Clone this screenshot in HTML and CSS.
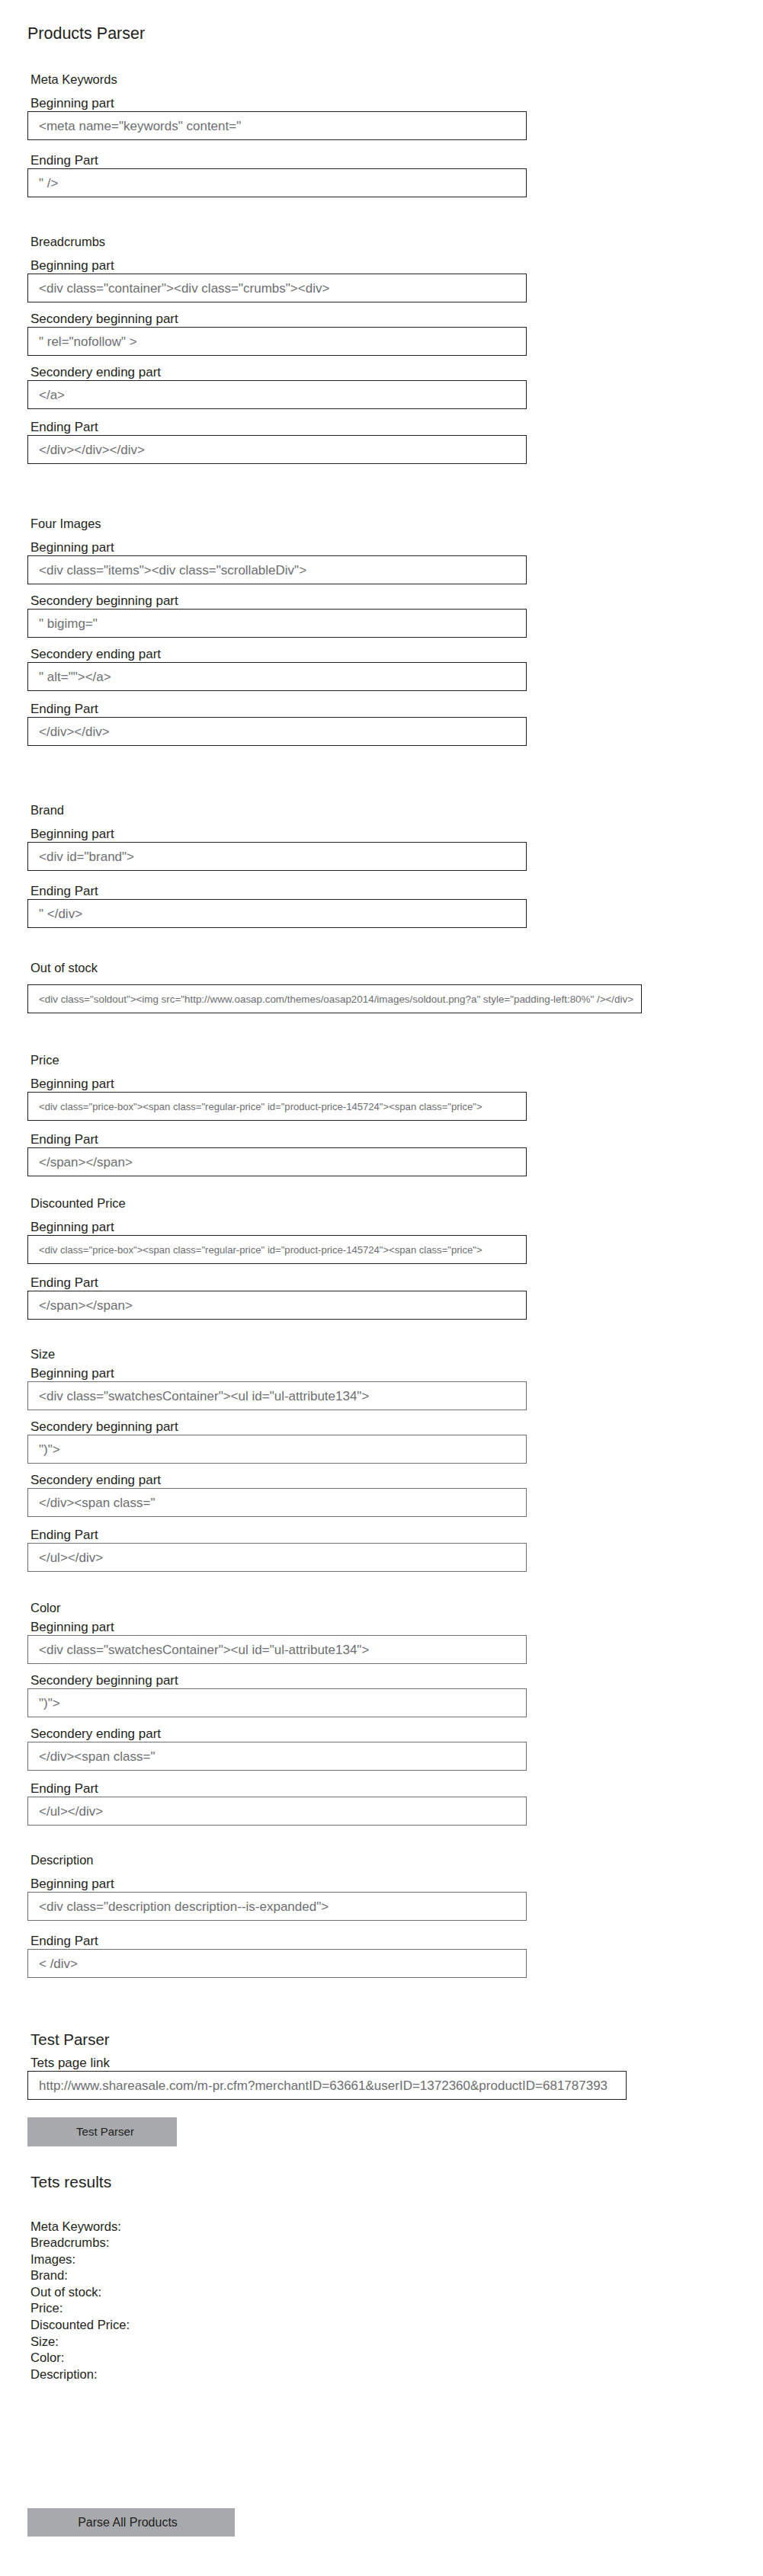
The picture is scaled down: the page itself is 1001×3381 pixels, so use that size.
FILE: index.html
```html
<!DOCTYPE html>
<html lang="en">
<head>
<meta charset="utf-8">
<title>Products Parser</title>
<link rel="stylesheet" href="styles.css">
</head>
<body>
<main class="page">
  <h1 class="page-title">Products Parser</h1>

  <section class="group g-meta">
    <h2 class="group-title">Meta Keywords</h2>
    <div class="field">
      <div class="field-label">Beginning part</div>
      <div class="field-box">&lt;meta name="keywords" content="</div>
    </div>
    <div class="field field-end-wide">
      <div class="field-label">Ending Part</div>
      <div class="field-box">" /&gt;</div>
    </div>
  </section>

  <section class="group g-crumbs">
    <h2 class="group-title">Breadcrumbs</h2>
    <div class="field">
      <div class="field-label">Beginning part</div>
      <div class="field-box">&lt;div class="container"&gt;&lt;div class="crumbs"&gt;&lt;div&gt;</div>
    </div>
    <div class="field">
      <div class="field-label">Secondery beginning part</div>
      <div class="field-box">" rel="nofollow" &gt;</div>
    </div>
    <div class="field">
      <div class="field-label">Secondery ending part</div>
      <div class="field-box">&lt;/a&gt;</div>
    </div>
    <div class="field field-end">
      <div class="field-label">Ending Part</div>
      <div class="field-box">&lt;/div&gt;&lt;/div&gt;&lt;/div&gt;</div>
    </div>
  </section>

  <section class="group g-images">
    <h2 class="group-title">Four Images</h2>
    <div class="field">
      <div class="field-label">Beginning part</div>
      <div class="field-box">&lt;div class="items"&gt;&lt;div class="scrollableDiv"&gt;</div>
    </div>
    <div class="field">
      <div class="field-label">Secondery beginning part</div>
      <div class="field-box">" bigimg="</div>
    </div>
    <div class="field">
      <div class="field-label">Secondery ending part</div>
      <div class="field-box">" alt=""&gt;&lt;/a&gt;</div>
    </div>
    <div class="field field-end">
      <div class="field-label">Ending Part</div>
      <div class="field-box">&lt;/div&gt;&lt;/div&gt;</div>
    </div>
  </section>

  <section class="group g-brand">
    <h2 class="group-title">Brand</h2>
    <div class="field">
      <div class="field-label">Beginning part</div>
      <div class="field-box">&lt;div id="brand"&gt;</div>
    </div>
    <div class="field field-end-wide">
      <div class="field-label">Ending Part</div>
      <div class="field-box">" &lt;/div&gt;</div>
    </div>
  </section>

  <section class="group g-stock">
    <h2 class="group-title">Out of stock</h2>
    <div class="field">
      <div class="field-box field-box-long field-box-small">&lt;div class="soldout"&gt;&lt;img src="http://www.oasap.com/themes/oasap2014/images/soldout.png?a" style="padding-left:80%" /&gt;&lt;/div&gt;</div>
    </div>
  </section>

  <section class="group g-price">
    <h2 class="group-title">Price</h2>
    <div class="field">
      <div class="field-label">Beginning part</div>
      <div class="field-box field-box-small">&lt;div class="price-box"&gt;&lt;span class="regular-price" id="product-price-145724"&gt;&lt;span class="price"&gt;</div>
    </div>
    <div class="field field-end-mid">
      <div class="field-label">Ending Part</div>
      <div class="field-box">&lt;/span&gt;&lt;/span&gt;</div>
    </div>
  </section>

  <section class="group g-discount">
    <h2 class="group-title">Discounted Price</h2>
    <div class="field">
      <div class="field-label">Beginning part</div>
      <div class="field-box field-box-small">&lt;div class="price-box"&gt;&lt;span class="regular-price" id="product-price-145724"&gt;&lt;span class="price"&gt;</div>
    </div>
    <div class="field field-end-mid">
      <div class="field-label">Ending Part</div>
      <div class="field-box">&lt;/span&gt;&lt;/span&gt;</div>
    </div>
  </section>

  <section class="group g-size group-tight">
    <h2 class="group-title">Size</h2>
    <div class="field">
      <div class="field-label">Beginning part</div>
      <div class="field-box field-box-soft">&lt;div class="swatchesContainer"&gt;&lt;ul id="ul-attribute134"&gt;</div>
    </div>
    <div class="field">
      <div class="field-label">Secondery beginning part</div>
      <div class="field-box field-box-soft">")"&gt;</div>
    </div>
    <div class="field">
      <div class="field-label">Secondery ending part</div>
      <div class="field-box field-box-soft">&lt;/div&gt;&lt;span class="</div>
    </div>
    <div class="field field-end">
      <div class="field-label">Ending Part</div>
      <div class="field-box field-box-soft">&lt;/ul&gt;&lt;/div&gt;</div>
    </div>
  </section>

  <section class="group g-color group-tight">
    <h2 class="group-title">Color</h2>
    <div class="field">
      <div class="field-label">Beginning part</div>
      <div class="field-box field-box-soft">&lt;div class="swatchesContainer"&gt;&lt;ul id="ul-attribute134"&gt;</div>
    </div>
    <div class="field">
      <div class="field-label">Secondery beginning part</div>
      <div class="field-box field-box-soft">")"&gt;</div>
    </div>
    <div class="field">
      <div class="field-label">Secondery ending part</div>
      <div class="field-box field-box-soft">&lt;/div&gt;&lt;span class="</div>
    </div>
    <div class="field field-end">
      <div class="field-label">Ending Part</div>
      <div class="field-box field-box-soft">&lt;/ul&gt;&lt;/div&gt;</div>
    </div>
  </section>

  <section class="group g-desc">
    <h2 class="group-title">Description</h2>
    <div class="field">
      <div class="field-label">Beginning part</div>
      <div class="field-box field-box-soft">&lt;div class="description description--is-expanded"&gt;</div>
    </div>
    <div class="field field-end-wide">
      <div class="field-label">Ending Part</div>
      <div class="field-box field-box-soft">&lt; /div&gt;</div>
    </div>
  </section>

  <section class="test">
    <h2 class="section-title">Test Parser</h2>
    <div class="field field-link">
      <div class="field-label">Tets page link</div>
      <div class="field-box field-box-url">http://www.shareasale.com/m-pr.cfm?merchantID=63661&amp;userID=1372360&amp;productID=681787393</div>
    </div>
    <button class="btn btn-test" type="button">Test Parser</button>
  </section>

  <section class="results">
    <h2 class="section-title results-title">Tets results</h2>
    <ul class="result-list">
      <li>Meta Keywords:</li>
      <li>Breadcrumbs:</li>
      <li>Images:</li>
      <li>Brand:</li>
      <li>Out of stock:</li>
      <li>Price:</li>
      <li>Discounted Price:</li>
      <li>Size:</li>
      <li>Color:</li>
      <li>Description:</li>
    </ul>
  </section>

  <button class="btn btn-parse" type="button">Parse All Products</button>
</main>
</body>
</html>
```

FILE: styles.css
```css
html, body {
  margin: 0;
  padding: 0;
  background: #ffffff;
}

body {
  font-family: "Liberation Sans", Arial, sans-serif;
  color: #231f20;
}

.page {
  padding: 0 0 60px 36px;
  display: flex;
  flex-direction: column;
  align-items: flex-start;
}

.page-title {
  margin: 31px 0 0 0;
  font-size: 21.5px;
  line-height: 26px;
  font-weight: normal;
}

.group {
  display: flex;
  flex-direction: column;
}

.group-title {
  margin: 0;
  padding-left: 4px;
  font-size: 16.5px;
  line-height: 20px;
  font-weight: normal;
}

.g-meta { margin-top: 37px; }
.g-crumbs { margin-top: 48px; }
.g-images { margin-top: 68px; }
.g-brand { margin-top: 74px; }
.g-stock { margin-top: 41.5px; }
.g-price { margin-top: 51px; }
.g-discount { margin-top: 25px; }
.g-size { margin-top: 35px; }
.g-color { margin-top: 36.5px; }
.g-desc { margin-top: 34.5px; }

.field {
  margin-top: 12px;
}

.group-tight .group-title + .field {
  margin-top: 6.5px;
}

.field-end { margin-top: 14px; }
.field-end-mid { margin-top: 15px; }
.field-end-wide { margin-top: 17px; }

.field-label {
  padding-left: 4px;
  font-size: 17px;
  line-height: 20px;
}

.field-box {
  box-sizing: border-box;
  width: 655px;
  height: 38px;
  border: 1px solid #231f20;
  padding: 1px 0 0 14px;
  font-size: 17px;
  line-height: 35px;
  color: #6d6e71;
  white-space: nowrap;
  overflow: hidden;
}

.field-box-soft {
  border-color: #6d6e71;
}

.field-box-small {
  font-size: 13.1px;
}

.field-box-long {
  width: 806px;
  font-size: 13.4px;
}

.test {
  margin-top: 68px;
  display: flex;
  flex-direction: column;
  align-items: flex-start;
}

.section-title {
  margin: 0;
  padding-left: 4px;
  font-size: 20.5px;
  line-height: 26px;
  font-weight: normal;
}

.field-link {
  margin-top: 8.5px;
}

.field-box-url {
  width: 786px;
}

.btn {
  box-sizing: border-box;
  height: 37.5px;
  margin: 0;
  padding: 0;
  border: none;
  background: #a7a9ac;
  box-shadow: 0 1px 0 #ececec;
  color: #231f20;
  font-family: "Liberation Sans", Arial, sans-serif;
  text-align: center;
}

.btn-test {
  margin-top: 23px;
  width: 196px;
  font-size: 15px;
  padding-left: 8px;
}

.results {
  margin-top: 34px;
}

.results-title {
  font-size: 21px;
}

.result-list {
  list-style: none;
  margin: 35px 0 0 0;
  padding: 0 0 0 4px;
  font-size: 16.6px;
  line-height: 21.6px;
}

.btn-parse {
  margin-top: 164.5px;
  width: 272px;
  font-size: 16px;
  padding-right: 9px;
}
```
